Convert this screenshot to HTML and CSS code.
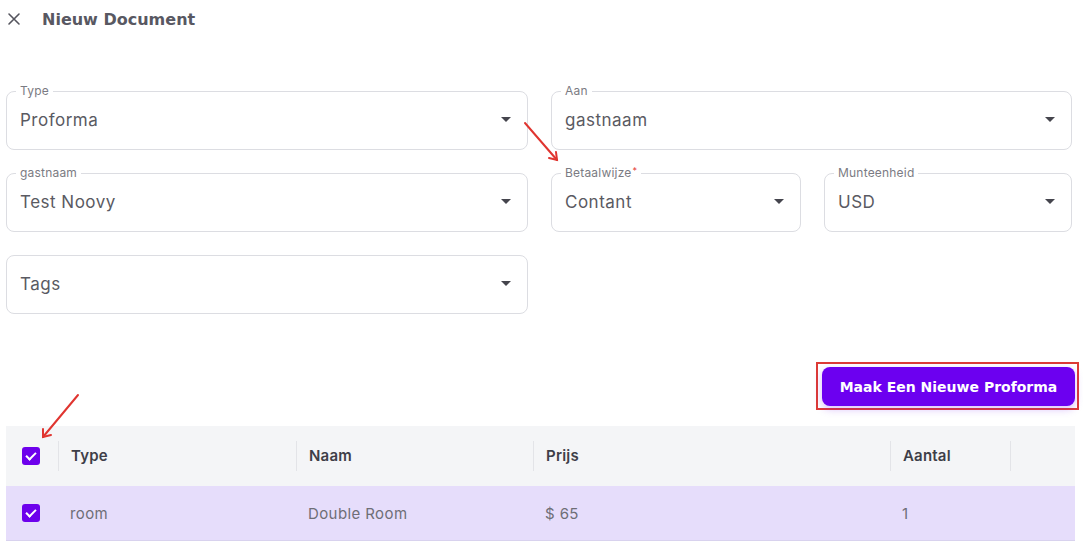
FILE: index.html
```html
<!DOCTYPE html>
<html lang="nl">
<head>
    <meta charset="UTF-8">
    <meta name="viewport" content="width=device-width, initial-scale=1.0">
    <title>Nieuw Document</title>
    <link rel="stylesheet" href="styles.css">
</head>
<body>
    <div class="page">
        <header class="topbar">
            <button class="close" aria-label="Sluiten">
                <svg width="14" height="14" viewBox="0 0 14 14">
                    <path d="M2 2 L12 12 M12 2 L2 12" stroke="#55555e" stroke-width="1.6" stroke-linecap="round"/>
                </svg>
            </button>
            <h1 class="title">Nieuw Document</h1>
        </header>

        <div class="form">
            <div class="field">
                <span class="label">Type</span>
                <span class="value">Proforma</span>
                <span class="caret"></span>
            </div>
            <div class="field wide">
                <span class="label">Aan</span>
                <span class="value">gastnaam</span>
                <span class="caret"></span>
            </div>
            <div class="field">
                <span class="label">gastnaam</span>
                <span class="value">Test Noovy</span>
                <span class="caret"></span>
            </div>
            <div class="field">
                <span class="label">Betaalwijze<sup class="req">*</sup></span>
                <span class="value">Contant</span>
                <span class="caret"></span>
            </div>
            <div class="field">
                <span class="label">Munteenheid</span>
                <span class="value">USD</span>
                <span class="caret"></span>
            </div>
            <div class="field">
                <span class="value">Tags</span>
                <span class="caret"></span>
            </div>
        </div>

        <div class="actions">
            <div class="highlight">
                <button class="primary">Maak Een Nieuwe Proforma</button>
            </div>
        </div>

        <div class="table">
            <div class="row head">
                <div class="cell check"><span class="box"></span></div>
                <div class="cell">Type</div>
                <div class="cell">Naam</div>
                <div class="cell">Prijs</div>
                <div class="cell">Aantal</div>
                <div class="cell"></div>
            </div>
            <div class="row selected">
                <div class="cell check"><span class="box"></span></div>
                <div class="cell">room</div>
                <div class="cell">Double Room</div>
                <div class="cell">$ 65</div>
                <div class="cell">1</div>
                <div class="cell"></div>
            </div>
        </div>
    </div>

    <!-- annotatie pijlen -->
    <svg class="notes" width="1083" height="547" viewBox="0 0 1083 547">
        <g stroke="#e03530" stroke-width="2" fill="none" stroke-linecap="round">
            <path d="M525 123 L557 160"/>
            <path d="M549 158 L557 160 L556 152"/>
            <path d="M78 395 L43 437"/>
            <path d="M43 429 L43 437 L51 435"/>
        </g>
    </svg>
</body>
</html>
```

FILE: styles.css
```css
body {
    margin: 0;
    background-color: #fff;
    font-family: Inter, "Noto Sans", sans-serif;
    color: #55555e;
}

.page {
    padding: 0 8px 0 6px;
}

.topbar {
    height: 38px;
    display: flex;
    align-items: center;
}

.close {
    width: 16px;
    height: 16px;
    padding: 0;
    border: none;
    background: none;
    display: flex;
    align-items: center;
    justify-content: center;
}

.title {
    margin: 0 0 0 20px;
    font-family: "DejaVu Sans", sans-serif;
    font-size: 16px;
    font-weight: 700;
    color: #585862;
}

/* velden */
.form {
    margin-top: 53px;
    display: grid;
    grid-template-columns: 522px 250px 248px;
    column-gap: 23px;
    row-gap: 23px;
}

.field {
    position: relative;
    height: 59px;
    box-sizing: border-box;
    border: 1px solid #dcdde2;
    border-radius: 8px;
    display: flex;
    align-items: center;
    padding: 0 16px 2px 13px;
}

.field.wide {
    grid-column: span 2;
}

.label {
    position: absolute;
    top: -8px;
    left: 9px;
    padding: 0 4px;
    background-color: #fff;
    font-size: 12px;
    line-height: 14px;
    color: #7b7b83;
    letter-spacing: 0.2px;
}

.req {
    color: #e53935;
    font-size: 9px;
    vertical-align: top;
    line-height: 10px;
    margin-left: 1px;
}

.value {
    flex: 1;
    font-size: 17px;
    color: #5a5a62;
    letter-spacing: 0.5px;
}

.caret {
    width: 0;
    height: 0;
    border-left: 5px solid transparent;
    border-right: 5px solid transparent;
    border-top: 5px solid #45454d;
}

/* knop */
.actions {
    margin-top: 48px;
    display: flex;
    justify-content: flex-end;
    margin-right: -4px;
}

.highlight {
    border: 2px solid #dd3b36;
    padding: 3px 2px 2px 4px;
}

.primary {
    height: 39px;
    width: 253px;
    border: none;
    border-radius: 8px;
    background-color: #6c00f0;
    color: #fff;
    font-family: "DejaVu Sans", sans-serif;
    font-size: 14px;
    font-weight: 700;
    box-shadow: 0 3px 8px rgba(108, 0, 240, 0.25);
    cursor: pointer;
}

/* tabel */
.table {
    margin-top: 16px;
    width: 1069px;
}

.row {
    display: grid;
    grid-template-columns: 52px 238px 237px 357px 120px 65px;
    align-items: center;
}

.row.head {
    height: 60px;
    background-color: #f4f5f7;
    font-size: 15px;
    font-weight: 600;
    color: #3e3e48;
    letter-spacing: 0.2px;
}

.row.selected {
    height: 54px;
    background-color: #e6ddfb;
    border-bottom: 1px solid #d8d2ee;
    font-size: 15px;
    color: #6e6e76;
    letter-spacing: 0.4px;
}

.cell {
    padding-left: 12px;
}

.head .cell + .cell {
    border-left: 1px solid #e3e4e8;
    line-height: 30px;
}

.head .cell:empty {
    height: 30px;
}

.cell.check {
    padding-left: 16px;
    display: flex;
}

.box {
    width: 18px;
    height: 18px;
    border-radius: 3px;
    background-color: #6d00ec;
    position: relative;
}

.box::after {
    content: "";
    position: absolute;
    left: 6px;
    top: 3px;
    width: 4px;
    height: 8px;
    border-right: 2px solid #fff;
    border-bottom: 2px solid #fff;
    transform: rotate(45deg);
}

.notes {
    position: absolute;
    top: 0;
    left: 0;
    pointer-events: none;
}
```
